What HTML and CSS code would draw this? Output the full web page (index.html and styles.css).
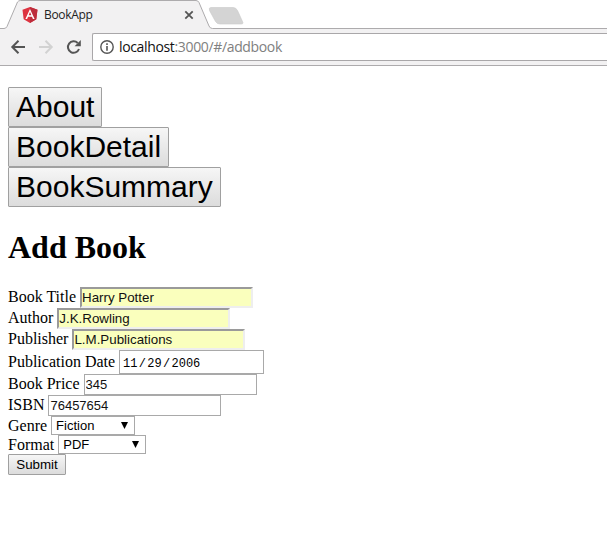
FILE: index.html
```html
<!DOCTYPE html>
<html lang="en">
<head>
<meta charset="utf-8">
<title>BookApp</title>
<link rel="stylesheet" href="styles.css">
</head>
<body>
<header class="browser">
  <div class="tabs">
    <svg class="tab-shape" width="607" height="29" viewBox="0 0 607 29" aria-hidden="true">
      <path d="M-2 28.500H4Q6 28.500 7 26.500L17.500 2Q18.500 .5 20.500 .5H196Q198 .5 199 2.500L209 26Q210 28.500 212.500 28.500H609V31H-2Z" fill="#f2f1f2" stroke="#adabad"/>
      <path d="M211 7.500H233Q236 7.500 237.500 10.500L242.500 21.500Q244 24 241 24H220Q217 24 215.500 21.500L209.500 10.500Q208.500 7.500 211 7.500Z" fill="#d4d4d4" stroke="#c9c9c9" stroke-width=".6"/>
    </svg>
    <div class="tab">
      <svg class="logo" width="16" height="16" viewBox="0 0 16 16" aria-hidden="true">
        <path d="M8 0L15.500 2.700L14.300 12.300L8 16L1.700 12.300L.5 2.700Z" fill="#dd3340"/>
        <path d="M8 0L15.500 2.700L14.300 12.300L8 16Z" fill="#bd2c3b"/>
        <path d="M8 2L3.400 12H5.100L6 9.700H10L10.900 12H12.600ZM8 5.100L9.400 8.300H6.600Z" fill="#fff" fill-rule="evenodd"/>
      </svg>
      <span class="tab-title">BookApp</span>
      <svg class="close" width="10" height="10" viewBox="0 0 10 10" aria-hidden="true"><path d="M1.300 1.300L8.700 8.700M8.700 1.300L1.300 8.700" stroke="#555" stroke-width="1.800"/></svg>
    </div>
  </div>
  <div class="toolbar">
    <svg class="nav" width="82" height="20" viewBox="0 0 82 20" fill="none" stroke-width="2" aria-hidden="true">
      <path d="M25 10H13M18.500 3.800L12.300 10L18.500 16.200" stroke="#555"/>
      <path d="M39 10H51M45.500 3.800L51.700 10L45.500 16.200" stroke="#d2d2d2"/>
      <path d="M79 12A5.700 5.700 0 1 1 77.700 6" stroke="#555"/>
      <path d="M80.800 3V9.200H74.600Z" fill="#555"/>
    </svg>
    <div class="address">
      <svg class="info" width="14" height="14" viewBox="0 0 14 14" aria-hidden="true"><circle cx="7" cy="7" r="6.200" fill="none" stroke="#555" stroke-width="1.400"/><path d="M6.200 3.300H7.800V4.900H6.200ZM6.200 6H7.800V10.700H6.200Z" fill="#555"/></svg>
      <span class="url"><span class="host">localhost</span>:3000/#/addbook</span>
    </div>
  </div>
</header>
<main>
  <nav class="links">
    <button class="button link">About</button>
    <button class="button link">BookDetail</button>
    <button class="button link">BookSummary</button>
  </nav>
  <h1>Add Book</h1>
  <form>
    <div class="row"><label for="title">Book Title</label><input class="field filled" id="title" value="Harry Potter"></div>
    <div class="row"><label for="author">Author</label><input class="field filled" id="author" value="J.K.Rowling"></div>
    <div class="row"><label for="publisher">Publisher</label><input class="field filled" id="publisher" value="L.M.Publications"></div>
    <div class="row date-row"><span class="label">Publication Date</span><div class="date"><span>11</span><span class="slash">/</span><span>29</span><span class="slash">/</span><span>2006</span></div></div>
    <div class="row"><label for="price">Book Price</label><input class="field" id="price" value="345"></div>
    <div class="row"><label for="isbn">ISBN</label><input class="field" id="isbn" value="76457654"></div>
    <div class="row select-row"><span class="label">Genre</span><div class="select genre"><span>Fiction</span><svg class="arrow" width="7" height="7" viewBox="0 0 7 7" aria-hidden="true"><path d="M0 0H7L3.500 7Z"/></svg></div></div>
    <div class="row select-row"><span class="label">Format</span><div class="select format"><span>PDF</span><svg class="arrow" width="7" height="7" viewBox="0 0 7 7" aria-hidden="true"><path d="M0 0H7L3.500 7Z"/></svg></div></div>
    <button class="button submit" type="button">Submit</button>
  </form>
</main>
</body>
</html>
```
FILE: styles.css
```css
* { box-sizing: border-box; }
body { margin: 0; background: #fff; color: #000; font: 16px/18px "Liberation Serif", serif; overflow: hidden; }
.browser { height: 66px; font-family: "Open Sans", sans-serif; }
.tabs { position: relative; height: 29px; }
.tab-shape { position: absolute; left: 0; top: 0; }
.tab { position: relative; display: flex; align-items: center; width: 194px; height: 29px; padding-left: 22px; }
.tab-title { margin-left: 6px; flex: 1; font-size: 12px; line-height: 29px; letter-spacing: -0.3px; color: #222; }
.toolbar { display: flex; align-items: center; height: 37px; padding-bottom: 1px; background: #f2f1f2; border-bottom: 1px solid #adabad; }
.nav { flex: none; }
.address { display: flex; align-items: center; flex: 1; height: 28px; margin-left: 10px; padding-left: 7px; background: #fff; border: 1px solid #a9a7a9; border-right: 0; border-radius: 2px 0 0 2px; }
.url { margin-left: 5px; font-size: 14px; line-height: 24px; letter-spacing: -0.35px; color: #808080; }
.host { color: #111; }
main { padding: 21px 8px 0; }
.links { display: flex; flex-direction: column; align-items: flex-start; }
.button { display: block; margin: 0; border: 1px solid #a0a0a0; border-radius: 1px; background: linear-gradient(#f6f6f6, #dcdcdc); color: #000; font-family: "Liberation Sans", sans-serif; }
.link { height: 40px; padding: 0 7px; font-size: 30px; line-height: 36px; }
.submit { width: 58px; height: 21px; padding: 0; font-size: 13.333px; line-height: 19px; }
h1 { margin: 22px 0 21px; font-size: 32px; line-height: 37px; font-weight: bold; }
.row { display: flex; align-items: center; height: 21px; gap: 4px; }
.row label, .label { line-height: 20px; font-size: 16px; }
.row label { padding-bottom: 1px; }
.field { width: 173px; height: 21px; margin: 0; padding: 1px; border: 1px solid #a9a9a9; background: #fff; color: #111; font: 13px "Liberation Sans", sans-serif; }
.filled { padding: 1px 0; border: 2px solid; border-color: #9a9a9a #eee #eee #9a9a9a; background: #faffbd; font-size: 13.333px; }
.date-row { height: 24px; }
.date { display: flex; align-items: center; width: 145px; height: 24px; padding: 3px 0 0 3px; border: 1px solid #a9a9a9; font: 12px "Liberation Mono", monospace; }
.slash { padding: 0 1.3px; }
.select-row { height: 19px; }
.select-row .label { line-height: 19px; }
.select { display: flex; align-items: center; justify-content: space-between; height: 19px; padding: 0 6px 0 4px; border: 1px solid #a9a9a9; font: 13px "Liberation Sans", sans-serif; }
.arrow { margin-bottom: 1px; }
.genre { width: 84px; }
.format { width: 88px; }
```
